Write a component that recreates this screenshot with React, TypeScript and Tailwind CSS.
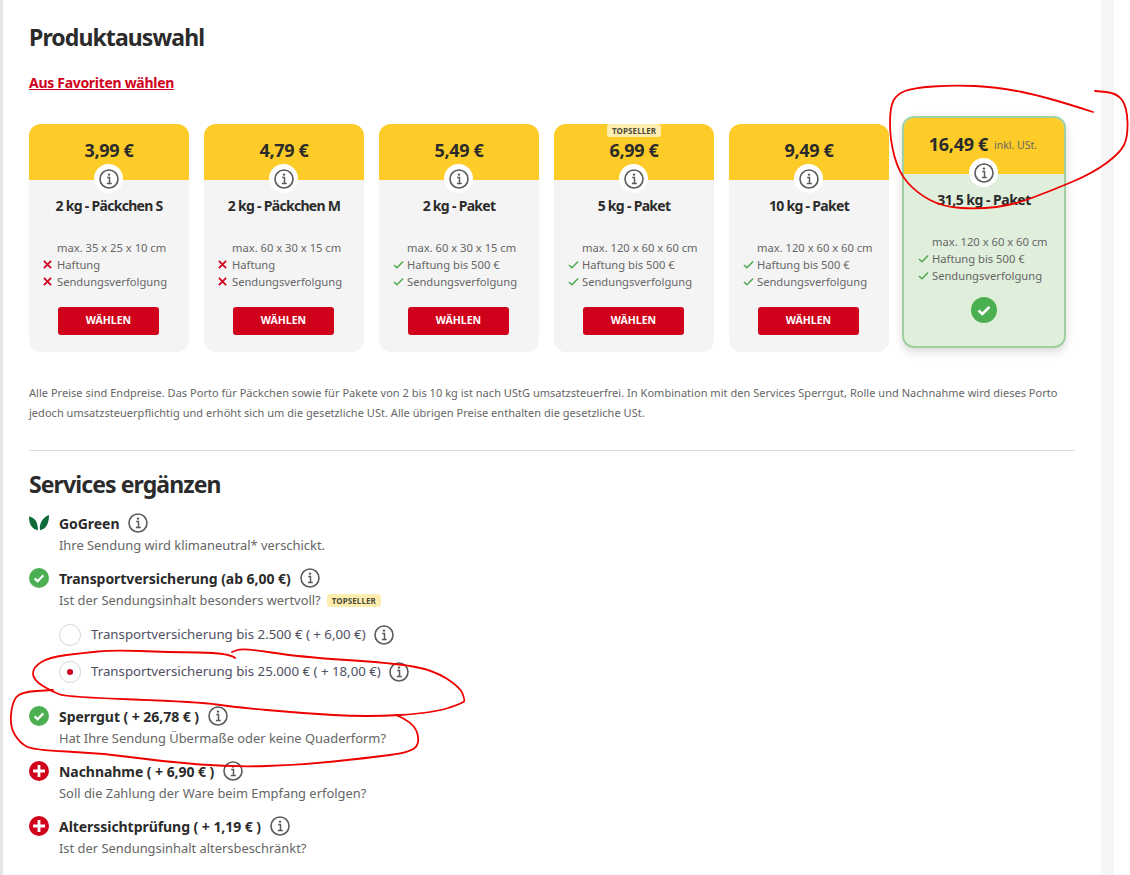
const products = [
  { price: '3,99 €', name: '2 kg - Päckchen S', size: 'max. 35 x 25 x 10 cm', liability: 'Haftung', ok: false },
  { price: '4,79 €', name: '2 kg - Päckchen M', size: 'max. 60 x 30 x 15 cm', liability: 'Haftung', ok: false },
  { price: '5,49 €', name: '2 kg - Paket', size: 'max. 60 x 30 x 15 cm', liability: 'Haftung bis 500 €', ok: true },
  { price: '6,99 €', name: '5 kg - Paket', size: 'max. 120 x 60 x 60 cm', liability: 'Haftung bis 500 €', ok: true, top: true },
  { price: '9,49 €', name: '10 kg - Paket', size: 'max. 120 x 60 x 60 cm', liability: 'Haftung bis 500 €', ok: true },
];

// Handgezeichnete Markierungen aus dem Screenshot
const scribbles: number[][][] = [
  [[1093,112],[1047,97],[997,87],[953,85],[913,88],[897,94],[890,107],[890,140],[899,173],[917,193],[943,207],[980,209],[1013,205],[1053,190],[1093,173],[1120,153],[1128,137],[1127,107],[1117,93],[1095,91]],
  [[235,658],[230,653],[167,652],[113,650],[83,653],[50,657],[33,667],[33,680],[53,692],[67,697],[200,702],[233,707],[300,713],[367,717],[433,713],[463,703],[465,700],[460,687],[433,670],[393,663],[300,657],[243,648],[232,652]],
  [[396,715],[413,722],[420,740],[413,752],[367,758],[300,765],[233,767],[167,762],[100,753],[33,750],[20,743],[10,727],[12,703],[20,692],[53,690]],
];

function smoothPath(pts: number[][]) {
  let d = `M${pts[0][0]} ${pts[0][1]}`;
  for (let i = 1; i < pts.length - 1; i++) {
    const mx = (pts[i][0] + pts[i + 1][0]) / 2;
    const my = (pts[i][1] + pts[i + 1][1]) / 2;
    d += ` Q${pts[i][0]} ${pts[i][1]} ${mx} ${my}`;
  }
  const last = pts[pts.length - 1];
  return `${d} L${last[0]} ${last[1]}`;
}

function InfoIcon({ className = 'w-5 h-5' }: { className?: string }) {
  return (
    <svg viewBox="0 0 20 20" className={`${className} shrink-0`} fill="none" stroke="#5a5a5a">
      <circle cx="10" cy="10" r="9" strokeWidth="1.6" />
      <circle cx="10" cy="5.6" r="1.2" fill="#5a5a5a" stroke="none" />
      <path d="M8.2 8.6H10.5V14.4M7.9 14.6H12.8" strokeWidth="1.5" />
    </svg>
  );
}

function CheckMark({ className = 'w-[11px] h-[11px]' }: { className?: string }) {
  return (
    <svg viewBox="0 0 12 12" className={`${className} shrink-0`} fill="none" stroke="#4fa84f" strokeWidth="1.6">
      <path d="M1 6.5L4.3 9.6L11 2.6" />
    </svg>
  );
}

function CrossMark() {
  return (
    <svg viewBox="0 0 10 10" className="w-[9px] h-[9px] shrink-0" fill="none" stroke="#d40020" strokeWidth="2">
      <path d="M1 1L9 9M9 1L1 9" />
    </svg>
  );
}

function CheckCircle() {
  return (
    <svg viewBox="0 0 20 20" className="w-5 h-5 shrink-0">
      <circle cx="10" cy="10" r="10" fill="#4cb052" />
      <path d="M5.6 10.4L8.6 13.2L14.4 7.4" fill="none" stroke="#fff" strokeWidth="2.2" />
    </svg>
  );
}

function PlusCircle() {
  return (
    <svg viewBox="0 0 20 20" className="w-5 h-5 shrink-0">
      <circle cx="10" cy="10" r="10" fill="#d0021b" />
      <path d="M10 4V16M4 10H16" fill="none" stroke="#fff" strokeWidth="2.8" />
    </svg>
  );
}

function Leaves() {
  return (
    <svg viewBox="0 0 20 16" className="w-5 h-4 shrink-0" fill="#0f6b3a">
      <path d="M0 1.5C5 2.5 8.6 5.5 9 15C3.5 14.5 0 10 0 1.5Z" />
      <path d="M20 0C20 8 17.4 14 11 15.2C10 8.5 13.5 2.5 20 0Z" />
    </svg>
  );
}

function Topseller({ className = '' }: { className?: string }) {
  return (
    <span className={`bg-[#fdeeb0] text-[#4b4b3a] text-[8px] leading-[13px] h-[13px] px-[5px] rounded-[3px] font-bold tracking-[0.1px] ${className}`}>
      TOPSELLER
    </span>
  );
}

function ProductCard({ price, name, size, liability, ok, top }: (typeof products)[number]) {
  return (
    <div className="w-40 h-[228px] bg-[#f4f4f4] rounded-xl overflow-hidden flex flex-col shrink-0">
      <div className="relative h-14 bg-[#fdcc28] flex items-center justify-center pb-[3px] shrink-0">
        {top && <Topseller className="absolute top-0 left-[53px]" />}
        <span className="text-[18px] font-bold text-[#2b2b2b] tracking-[-0.3px]">{price}</span>
        <span className="absolute left-[65px] top-[40px] w-[29px] h-[29px] rounded-full bg-white flex items-center justify-center">
          <InfoIcon />
        </span>
      </div>
      <div className="text-center text-[14px] leading-5 font-bold text-[#2b2b2b] mt-4 tracking-[-0.7px]">{name}</div>
      <div className="mt-[23px] pl-[14px] text-[11.2px] leading-[17px] text-[#666]">
        <div className="pl-[14px]">{size}</div>
        <div className="flex items-center gap-[3px]">
          {ok ? <CheckMark /> : <CrossMark />}
          <span className={ok ? '' : 'ml-[2px]'}>{liability}</span>
        </div>
        <div className="flex items-center gap-[3px]">
          {ok ? <CheckMark /> : <CrossMark />}
          <span className={ok ? '' : 'ml-[2px]'}>Sendungsverfolgung</span>
        </div>
      </div>
      <button type="button" className="mt-[17px] ml-[29px] w-[101px] h-7 bg-[#d0021b] rounded-[3px] text-white text-[10.5px] font-bold">
        WÄHLEN
      </button>
    </div>
  );
}

function SelectedCard() {
  return (
    <div className="w-[164px] h-[232px] -mt-2 -ml-[2px] bg-[#e0efdc] border-2 border-[#9fd09f] rounded-xl overflow-hidden flex flex-col shrink-0 shadow-[0_4px_10px_rgba(0,0,0,0.15)]">
      <div className="relative h-14 bg-[#fdcc28] flex items-center justify-center pb-[3px] pr-[2px] shrink-0">
        <span className="text-[18px] font-bold text-[#2b2b2b] tracking-[-0.3px]">16,49 €</span>
        <span className="text-[10.5px] text-[#666] ml-[6px] mt-[3px]">inkl. USt.</span>
        <span className="absolute left-[65px] top-[40px] w-[29px] h-[29px] rounded-full bg-white flex items-center justify-center">
          <InfoIcon />
        </span>
      </div>
      <div className="text-center text-[14px] leading-5 font-bold text-[#2b2b2b] mt-4 tracking-[-0.5px]">31,5 kg - Paket</div>
      <div className="mt-[23px] pl-[14px] text-[11.2px] leading-[17px] text-[#666]">
        <div className="pl-[14px]">max. 120 x 60 x 60 cm</div>
        <div className="flex items-center gap-[3px]">
          <CheckMark />
          <span>Haftung bis 500 €</span>
        </div>
        <div className="flex items-center gap-[3px]">
          <CheckMark />
          <span>Sendungsverfolgung</span>
        </div>
      </div>
      <div className="mt-[13px] flex justify-center">
        <svg viewBox="0 0 26 26" className="w-[26px] h-[26px]">
          <circle cx="13" cy="13" r="13" fill="#4cb052" />
          <path d="M7.5 13.5L11.3 17L18.5 9.8" fill="none" stroke="#fff" strokeWidth="2.6" />
        </svg>
      </div>
    </div>
  );
}

function Service({ icon, title, text, children }: { icon: React.ReactNode; title: string; text: React.ReactNode; children?: React.ReactNode }) {
  return (
    <div>
      <div className="flex items-center h-[22px]">
        <div className="w-[30px]">{icon}</div>
        <span className="text-[14px] font-bold text-[#2b2b2b] tracking-[-0.05px]">{title}</span>
        <span className="ml-[9px]"><InfoIcon /></span>
      </div>
      <div className="pl-[30px] text-[12.9px] leading-[22px] text-[#666] flex items-center gap-[6px]">{text}</div>
      {children}
    </div>
  );
}

function RadioRow({ label, checked }: { label: string; checked?: boolean }) {
  return (
    <div className="flex items-center h-[22px] pl-[30px]">
      <span className="w-[22px] h-[22px] rounded-full bg-white border border-[#d6d6d6] flex items-center justify-center shrink-0">
        {checked && <span className="w-[6px] h-[6px] rounded-full bg-[#d0021b]" />}
      </span>
      <span className="ml-[10px] text-[13.25px] text-[#4f4f5f]">{label}</span>
      <span className="ml-2"><InfoIcon /></span>
    </div>
  );
}

export default function App() {
  return (
    <div className="relative w-[1130px] h-[875px] overflow-hidden bg-white flex font-['Noto_Sans',sans-serif]">
      <div className="w-[3px] bg-[#e6e6e6] shrink-0" />
      <main className="w-[1098px] pl-[26px] pr-[26px] pt-[23px] shrink-0">
        <h1 className="text-[23px] leading-7 font-bold text-[#2b2b2b] tracking-[-0.9px]">Produktauswahl</h1>
        <a className="block mt-[22px] text-[14px] leading-5 font-bold text-[#d0021b] underline tracking-[-0.3px]">Aus Favoriten wählen</a>

        <div className="flex gap-[15px] mt-[31px]">
          {products.map((p) => (
            <ProductCard key={p.name} {...p} />
          ))}
          <SelectedCard />
        </div>

        <p className="mt-[31px] w-[1046px] text-[11px] leading-5 tracking-[0.03px] text-[#666]">
          Alle Preise sind Endpreise. Das Porto für Päckchen sowie für Pakete von 2 bis 10 kg ist nach UStG umsatzsteuerfrei. In Kombination mit den Services Sperrgut, Rolle und Nachnahme wird dieses Porto jedoch umsatzsteuerpflichtig und erhöht sich um die gesetzliche USt. Alle übrigen Preise enthalten die gesetzliche USt.
        </p>
        <hr className="mt-[27px] w-[1046px] border-[#d9d9d9]" />

        <h2 className="mt-[19px] text-[23px] leading-7 font-bold text-[#2b2b2b] tracking-[-0.9px]">Services ergänzen</h2>

        <div className="mt-[14px] flex flex-col gap-[11px]">
          <Service icon={<Leaves />} title="GoGreen" text="Ihre Sendung wird klimaneutral* verschickt." />
          <Service
            icon={<CheckCircle />}
            title="Transportversicherung (ab 6,00 €)"
            text={
              <>
                <span>Ist der Sendungsinhalt besonders wertvoll?</span>
                <Topseller />
              </>
            }
          >
            <div className="mt-[13px] flex flex-col gap-[15px] mb-[11px]">
              <RadioRow label="Transportversicherung bis 2.500 € ( + 6,00 €)" />
              <RadioRow label="Transportversicherung bis 25.000 € ( + 18,00 €)" checked />
            </div>
          </Service>
          <Service icon={<CheckCircle />} title="Sperrgut ( + 26,78 € )" text="Hat Ihre Sendung Übermaße oder keine Quaderform?" />
          <Service icon={<PlusCircle />} title="Nachnahme ( + 6,90 € )" text="Soll die Zahlung der Ware beim Empfang erfolgen?" />
          <Service icon={<PlusCircle />} title="Alterssichtprüfung ( + 1,19 € )" text="Ist der Sendungsinhalt altersbeschränkt?" />
        </div>
      </main>
      <div className="w-[13px] bg-[#f5f5f5] shrink-0" />

      <svg className="absolute inset-0 w-[1130px] h-[875px] pointer-events-none" viewBox="0 0 1130 875" fill="none" stroke="#ee0000" strokeWidth="1.8" strokeLinecap="round">
        {scribbles.map((pts, i) => (
          <path key={i} d={smoothPath(pts)} />
        ))}
      </svg>
    </div>
  );
}
